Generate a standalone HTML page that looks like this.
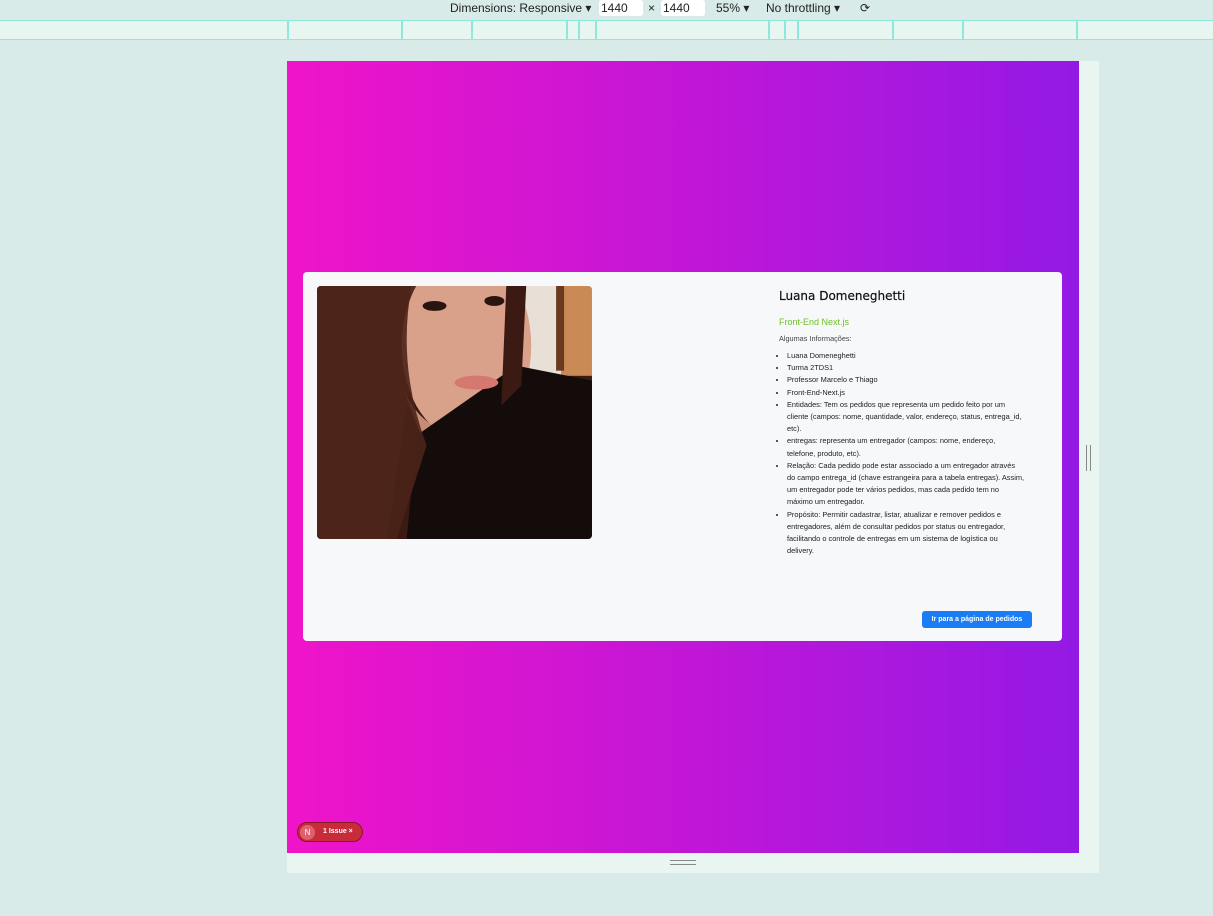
<!DOCTYPE html>
<html><head><meta charset="utf-8"><style>
*{margin:0;padding:0;box-sizing:border-box}
body{width:1213px;height:916px;background:#d9ebe8;position:relative;overflow:hidden;font-family:"Liberation Sans",sans-serif}
.tb{position:absolute;top:0;left:0;width:1213px;height:20px;font-size:12px;color:#222}
.tb span{position:absolute;top:1px}
.in{position:absolute;top:0;height:16px;background:#fff;border-radius:3px;font-size:12px;padding:1px 2px}
.ruler{position:absolute;top:20px;left:0;width:1213px;height:20px;background:#e8f6f2;border-top:1px solid #8ee8dc;border-bottom:1px solid #8ee8dc}
.ruler i{position:absolute;top:0;width:2px;height:18px;background:#8ee8dc}
.vp{position:absolute;left:287px;top:61px;width:792px;height:792px;background:linear-gradient(90deg,#f014c9,#9419e5)}
.rs{position:absolute;left:1079px;top:61px;width:20px;height:812px;background:#e9f5f1}
.bs{position:absolute;left:287px;top:853px;width:812px;height:20px;background:#e9f5f1}
.card{position:absolute;left:303px;top:272px;width:759px;height:369px;background:#f6f8fa;border-radius:4px}
.photo{position:absolute;left:14px;top:14px;width:275px;height:253px;border-radius:4px;overflow:hidden}
.txt{position:absolute;left:476px;top:15px;width:246px;color:#222}
h1{font-size:12px;font-weight:normal;font-family:"DejaVu Sans",sans-serif;color:#111;line-height:18px;-webkit-text-stroke:.2px #111}
h2{font-size:9px;font-weight:normal;color:#6cc324;margin-top:12px}
p{font-size:7.3px;color:#444;margin-top:7px}
ul{font-size:7.4px;line-height:12.2px;margin-top:7px;padding-left:8px;list-style:disc;color:#222}
.btn{position:absolute;left:619px;top:339px;width:110px;height:17px;background:#1a7df5;color:#fff;font-size:7px;font-weight:bold;text-align:center;line-height:17px;border-radius:3px}
.iss{position:absolute;left:297px;top:822px;width:66px;height:20px;background:#c82b3a;border-radius:10px;border:1px solid #8a1524;color:#fff;font-size:7px;font-weight:bold}
</style></head><body>
<div class="tb"><span style="left:450px">Dimensions: Responsive ▾</span><div class="in" style="left:599px;width:44px">1440</div><span style="left:648px">×</span><div class="in" style="left:661px;width:44px">1440</div><span style="left:716px">55% ▾</span><span style="left:766px">No throttling ▾</span><span style="left:860px">⟳</span></div>
<div class="ruler"><i style="left:287px"></i><i style="left:401px"></i><i style="left:471px"></i><i style="left:566px"></i><i style="left:578px"></i><i style="left:595px"></i><i style="left:768px"></i><i style="left:784px"></i><i style="left:797px"></i><i style="left:892px"></i><i style="left:962px"></i><i style="left:1076px"></i></div>
<div class="vp"></div><div class="rs"><div style="position:absolute;left:7px;top:384px;width:5px;height:26px;border-left:1px solid #888;border-right:1px solid #888"></div></div>
<div class="bs"><div style="position:absolute;left:383px;top:7px;width:26px;height:5px;border-top:1px solid #888;border-bottom:1px solid #888"></div></div>
<div class="card">
<div class="photo"><svg width="275" height="253" viewBox="0 0 276 254">
<rect width="276" height="254" fill="#3a1a12"/>
<rect x="200" y="0" width="76" height="90" fill="#e8e0d6"/>
<rect x="245" y="0" width="31" height="90" fill="#c98a55"/>
<rect x="240" y="0" width="8" height="85" fill="#6a3a20"/>
<path d="M0 0 L110 0 L90 120 L70 254 L0 254Z" fill="#5a2c1e"/>
<ellipse cx="150" cy="60" rx="65" ry="95" fill="#d9a08a"/>
<path d="M85 100 Q110 160 170 145 L175 185 L120 190Z" fill="#c68c74"/>
<path d="M100 150 L200 80 L276 95 L276 254 L90 254Z" fill="#140c0a"/>
<path d="M0 0 L95 0 Q80 80 110 160 L80 254 L0 254Z" fill="#4b2418" opacity=".9"/>
<path d="M190 0 L210 0 L205 100 L185 120Z" fill="#3a1a12"/>
<ellipse cx="118" cy="20" rx="12" ry="5" fill="#2a1410"/>
<ellipse cx="178" cy="15" rx="10" ry="5" fill="#2a1410"/>
<ellipse cx="160" cy="97" rx="22" ry="7" fill="#d47870"/>
</svg></div>
<div class="txt">
<h1>Luana Domeneghetti</h1>
<h2>Front-End Next.js</h2>
<p>Algumas Informações:</p>
<ul><li>Luana Domeneghetti</li><li>Turma 2TDS1</li><li>Professor Marcelo e Thiago</li><li>Front-End-Next.js</li>
<li>Entidades: Tem os pedidos que representa um pedido feito por um cliente (campos: nome, quantidade, valor, endereço, status, entrega_id, etc).</li>
<li>entregas: representa um entregador (campos: nome, endereço, telefone, produto, etc).</li>
<li>Relação: Cada pedido pode estar associado a um entregador através do campo entrega_id (chave estrangeira para a tabela entregas). Assim, um entregador pode ter vários pedidos, mas cada pedido tem no máximo um entregador.</li>
<li>Propósito: Permitir cadastrar, listar, atualizar e remover pedidos e entregadores, além de consultar pedidos por status ou entregador, facilitando o controle de entregas em um sistema de logística ou delivery.</li></ul>
</div>
<div class="btn">Ir para a página de pedidos</div>
</div>
<div class="iss"><div style="position:absolute;left:2px;top:2px;width:15px;height:15px;border-radius:50%;background:#e06070;text-align:center;line-height:15px;font-weight:normal;font-size:8px">N</div><span style="position:absolute;left:25px;top:5px">1 Issue ×</span></div>
</body></html>
